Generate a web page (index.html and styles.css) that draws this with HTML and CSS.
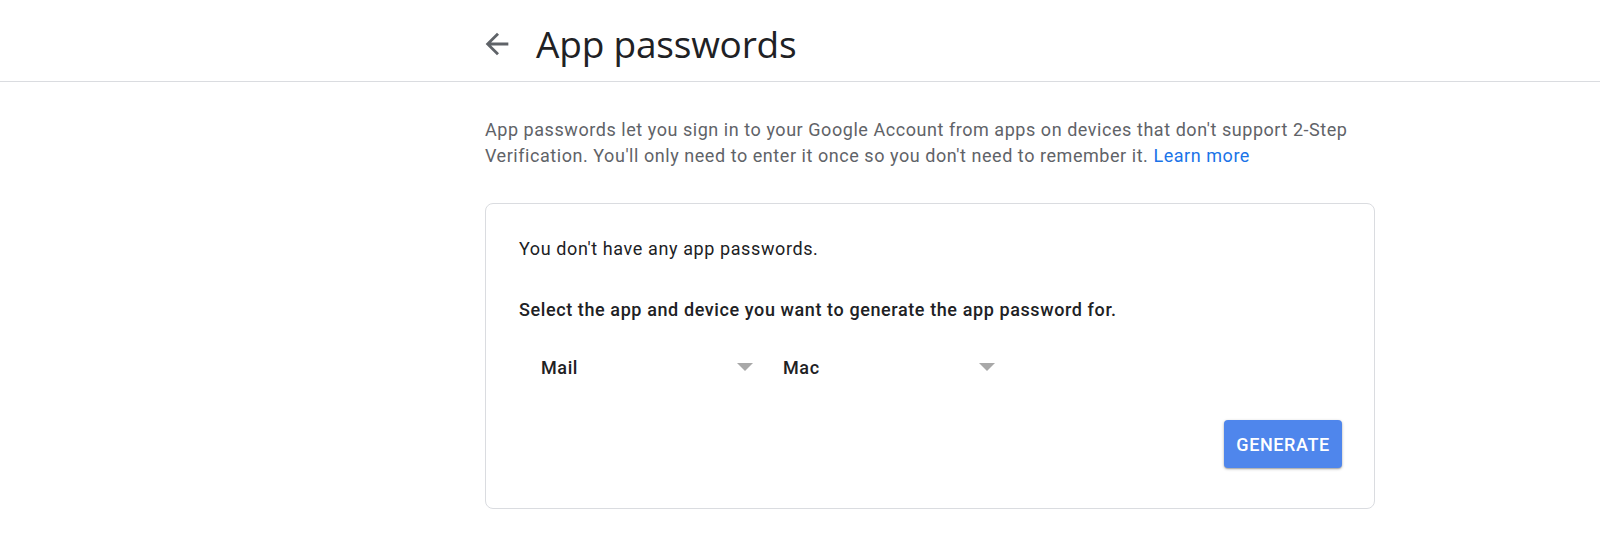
FILE: index.html
```html
<!DOCTYPE html>
<html lang="en">
<head>
<meta charset="utf-8">
<title>App passwords</title>
<link rel="stylesheet" href="styles.css">
</head>
<body>
<header class="topbar">
  <div class="topbar-inner">
    <a class="back" href="#" aria-label="Back">
      <svg viewBox="0 0 24 24" width="34" height="34"><path d="M20 11H7.83l5.59-5.59L12 4l-8 8 8 8 1.41-1.41L7.83 13H20v-2z" fill="#5f6368"/></svg>
    </a>
    <h1 class="title">App passwords</h1>
  </div>
</header>
<main class="page">
  <div class="content">
    <p class="intro">App passwords let you sign in to your Google Account from apps on devices that don't support 2-Step Verification. You'll only need to enter it once so you don't need to remember it. <a class="link" href="#">Learn more</a></p>
    <section class="card">
      <p class="card-text">You don't have any app passwords.</p>
      <p class="card-text strong">Select the app and device you want to generate the app password for.</p>
      <div class="selects">
        <div class="select"><span class="select-label">Mail</span><span class="caret"></span></div>
        <div class="select"><span class="select-label">Mac</span><span class="caret"></span></div>
      </div>
      <div class="actions">
        <button class="btn" type="button">GENERATE</button>
      </div>
    </section>
  </div>
</main>
</body>
</html>
```
FILE: styles.css
```css
* { box-sizing: border-box; }
html, body { margin: 0; padding: 0; background: #fff; }
body { font-family: Roboto, "Liberation Sans", Arial, sans-serif; color: #202124; }

.topbar {
  height: 82px;
  border-bottom: 1px solid #dadce0;
}
.topbar-inner {
  height: 81px;
  display: flex;
  align-items: center;
  padding-left: 480px;
  padding-top: 6px;
}
.back { display: flex; width: 34px; height: 34px; margin-right: 22px; }
.title {
  margin: 0;
  font-family: "Open Sans", Roboto, sans-serif;
  font-weight: 400;
  font-size: 37px;
  color: #202124;
  letter-spacing: -0.2px;
  line-height: 44px;
}

.page { padding-left: 485px; }
.content { width: 890px; }

.intro {
  margin: 35px 0 0;
  font-size: 18px;
  line-height: 26px;
  color: #5f6368;
  letter-spacing: 0.55px;
}
.link { color: #1a73e8; text-decoration: none; }

.card {
  margin-top: 34px;
  border: 1px solid #dadce0;
  border-radius: 8px;
  padding: 33px 32px 40px 33px;
}
.card-text {
  margin: 0;
  font-size: 18px;
  line-height: 24px;
  color: #202124;
  letter-spacing: 0.6px;
}
.card-text.strong { margin-top: 37px; font-weight: 500; letter-spacing: 0.6px; }

.selects {
  display: flex;
  margin-top: 21px;
}
.select {
  width: 242px;
  height: 48px;
  display: flex;
  align-items: center;
  justify-content: space-between;
  padding: 0 8px 0 22px;
  font-size: 18px;
  font-weight: 500;
  letter-spacing: 0.6px;
  color: #202124;
}
.caret {
  width: 0; height: 0;
  border-left: 8px solid transparent;
  border-right: 8px solid transparent;
  border-top: 8px solid #a8a8a8;
}

.actions {
  display: flex;
  justify-content: flex-end;
  margin-top: 29px;
}
.btn {
  width: 118px;
  height: 48px;
  border: 0;
  border-radius: 4px;
  background: #4f86ec;
  color: #fff;
  font-family: Roboto, "Liberation Sans", sans-serif;
  font-size: 18px;
  font-weight: 500;
  letter-spacing: 0.6px;
  box-shadow: 0 1px 3px rgba(0,0,0,0.3), 0 1px 1px rgba(0,0,0,0.14);
  cursor: pointer;
  padding: 0;
}
```
